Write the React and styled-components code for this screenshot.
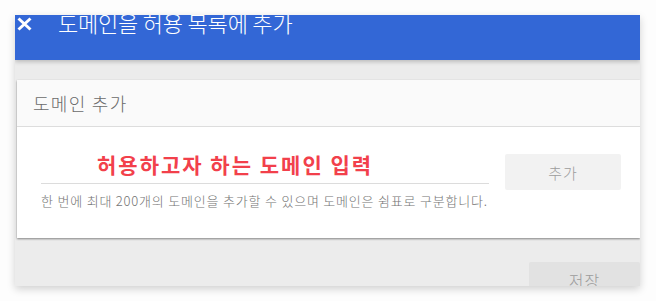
import React from 'react';
import styled, { createGlobalStyle } from 'styled-components';

const GlobalStyle = createGlobalStyle`
  body {
    margin: 0;
    background: #fdfdfd;
    font-family: "Noto Sans CJK KR", "Noto Sans", sans-serif;
  }
`;

const Page = styled.div`
  padding: 15px 0 0 15px;
  height: 301px;
  box-sizing: border-box;
  overflow: hidden;
`;

const Dialog = styled.div`
  width: 625px;
  height: 271px;
  background: #ececec;
  box-shadow: 0 3px 8px rgba(0, 0, 0, 0.18);
  display: flex;
  flex-direction: column;
  overflow: hidden;
`;

const Header = styled.header`
  height: 45px;
  flex-shrink: 0;
  background: #3367d6;
  box-shadow: 0 2px 4px rgba(0, 0, 0, 0.2);
  display: flex;
  align-items: flex-start;
  position: relative;
  z-index: 1;
`;

const Close = styled.svg`
  margin: 2px 0 0 2px;
  width: 15px;
  height: 14px;
  flex-shrink: 0;
`;

const Title = styled.h1`
  margin: -5px 0 0 26px;
  font-size: 22px;
  font-weight: 300;
  line-height: 24px;
  letter-spacing: -0.2px;
  color: #fff;
`;

const Body = styled.div`
  padding: 20px 0 0 2px;
  display: flex;
  flex-direction: column;
`;

const Card = styled.section`
  background: #fff;
  box-shadow: 0 1px 2px rgba(0, 0, 0, 0.45);
`;

const CardHead = styled.div`
  height: 46px;
  background: #fafafa;
  border-bottom: 1px solid #dddddd;
  display: flex;
  align-items: center;
  padding-left: 16px;
  font-size: 18px;
  font-weight: 300;
  letter-spacing: 1.3px;
  color: #6b6b6b;
`;

const CardBody = styled.div`
  height: 111px;
  box-sizing: border-box;
  padding: 27px 19px 0 24px;
  display: flex;
  align-items: flex-start;
`;

const Field = styled.div`
  width: 449px;
  display: flex;
  flex-direction: column;
`;

const Input = styled.div`
  height: 29px;
  border-bottom: 1px solid #dcdcdc;
  padding-left: 56px;
  font-size: 21px;
  line-height: 21px;
  font-weight: 700;
  letter-spacing: 2px;
  color: #f2404b;
`;

const Hint = styled.p`
  margin: 10px 0 0;
  font-size: 13px;
  font-weight: 300;
  line-height: 14px;
  letter-spacing: 0.8px;
  color: #747474;
`;

const Button = styled.button`
  border: none;
  border-radius: 2px;
  font-family: inherit;
  font-weight: 300;
  letter-spacing: 1px;
  color: #9c9c9c;
  width: ${p => p.$w}px;
  height: 36px;
  font-size: ${p => p.$size}px;
  background: ${p => p.$bg};
  flex-shrink: 0;
  margin-left: ${p => p.$gap || 0}px;
`;

const Footer = styled.div`
  display: flex;
  justify-content: flex-end;
  padding-top: 24px;
`;

export default function App() {
  return (
    <>
      <GlobalStyle />
      <Page>
        <Dialog>
          <Header>
            <Close viewBox="0 0 15 14">
              <path d="M1.5 1.5 L13.5 12.5 M13.5 1.5 L1.5 12.5" stroke="#fff" strokeWidth="3" />
            </Close>
            <Title>도메인을 허용 목록에 추가</Title>
          </Header>
          <Body>
            <Card>
              <CardHead>도메인 추가</CardHead>
              <CardBody>
                <Field>
                  <Input>허용하고자 하는 도메인 입력</Input>
                  <Hint>한 번에 최대 200개의 도메인을 추가할 수 있으며 도메인은 쉼표로 구분합니다.</Hint>
                </Field>
                <Button $w={116} $size={15} $bg="#f2f2f2" $gap={16}>추가</Button>
              </CardBody>
            </Card>
            <Footer>
              <Button $w={111} $size={16} $bg="#e2e2e2">저장</Button>
            </Footer>
          </Body>
        </Dialog>
      </Page>
    </>
  );
}
